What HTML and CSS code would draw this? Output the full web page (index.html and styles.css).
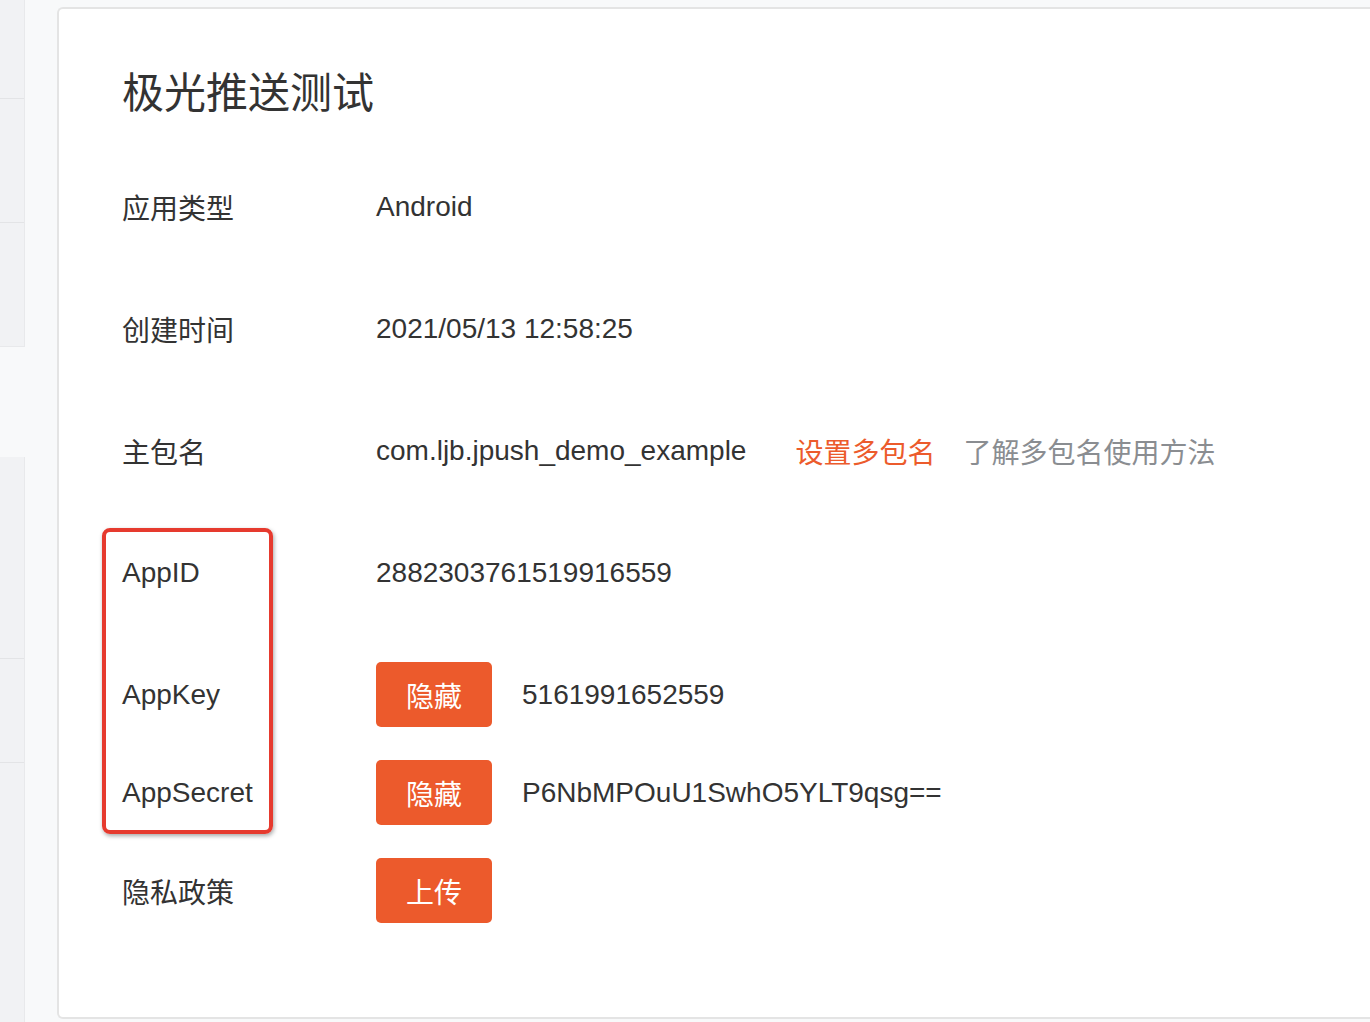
FILE: index.html
```
<!DOCTYPE html>
<html lang="zh-CN">
<head>
    <meta charset="UTF-8">
    <meta name="viewport" content="width=device-width, initial-scale=1.0">
    <title>极光推送测试</title>
    <link rel="stylesheet" href="styles.css">
</head>
<body>
    <div class="page">
        <div class="sidebar">
            <div class="side-group">
                <div class="side-item" style="height: 98px"></div>
                <div class="side-item" style="height: 123px"></div>
                <div class="side-item" style="height: 123px"></div>
            </div>
            <div class="side-group lower">
                <div class="side-item" style="height: 201px"></div>
                <div class="side-item" style="height: 103px"></div>
                <div class="side-item" style="height: 300px"></div>
            </div>
        </div>

        <div class="card">
            <h1 class="card-title">极光推送测试</h1>

            <div class="row tall">
                <div class="label">应用类型</div>
                <div class="value">Android</div>
            </div>
            <div class="row tall">
                <div class="label">创建时间</div>
                <div class="value">2021/05/13 12:58:25</div>
            </div>
            <div class="row tall">
                <div class="label">主包名</div>
                <div class="value">com.ljb.jpush_demo_example</div>
                <a class="link primary" href="#">设置多包名</a>
                <a class="link muted" href="#">了解多包名使用方法</a>
            </div>
            <div class="row tall">
                <div class="label">AppID</div>
                <div class="value">2882303761519916559</div>
            </div>
            <div class="row">
                <div class="label">AppKey</div>
                <button class="btn">隐藏</button>
                <div class="value secret">5161991652559</div>
            </div>
            <div class="row">
                <div class="label">AppSecret</div>
                <button class="btn">隐藏</button>
                <div class="value secret">P6NbMPOuU1SwhO5YLT9qsg==</div>
            </div>
            <div class="row">
                <div class="label">隐私政策</div>
                <button class="btn">上传</button>
            </div>

            <!-- annotation around the key fields -->
            <div class="highlight"></div>
        </div>
    </div>
</body>
</html>
```

FILE: styles.css
```
html, body {
    margin: 0;
    padding: 0;
}
body {
    font-family: "Liberation Sans", "Noto Sans CJK SC", sans-serif;
    background: #f8f9fa;
    color: #333;
    overflow: hidden;
    height: 1022px;
}
.page {
    display: flex;
    align-items: flex-start;
    height: 1022px;
}
.sidebar {
    width: 25px;
    flex-shrink: 0;
    display: flex;
    flex-direction: column;
}
.side-group {
    display: flex;
    flex-direction: column;
    background: #f1f2f4;
    border-right: 1px solid #e8e9eb;
    border-bottom: 1px solid #e8e9eb;
}
.side-group.lower {
    margin-top: 110px;
    border-bottom: none;
}
.side-item {
    border-bottom: 1px solid #e3e4e6;
}
.side-item:last-child {
    border-bottom: none;
}
.card {
    position: relative;
    flex: 1;
    height: 1012px;
    box-sizing: border-box;
    margin: 7px 0 0 32px;
    padding: 64px 0 0 63px;
    background: #fff;
    border: 2px solid #e4e4e4;
    border-right: none;
    border-radius: 6px 0 0 6px;
}
.card-title {
    margin: 0 0 59px 0;
    font-size: 42px;
    line-height: 42px;
    font-weight: normal;
    color: #333;
}
.row {
    display: flex;
    align-items: center;
    height: 65px;
    margin-bottom: 33px;
    font-size: 28px;
}
.row.tall {
    margin-bottom: 57px;
}
.label {
    width: 254px;
    flex-shrink: 0;
    color: #333;
}
.value {
    color: #333;
}
.value.secret {
    margin-left: 30px;
}
.link {
    text-decoration: none;
    font-size: 28px;
}
.link.primary {
    color: #ec5b2c;
    margin-left: 49px;
}
.link.muted {
    color: #8a8d91;
    margin-left: 28px;
}
.btn {
    width: 116px;
    height: 65px;
    border: none;
    border-radius: 5px;
    background: #ec5a2c;
    color: #fff;
    font-family: inherit;
    font-size: 28px;
    padding: 0;
    cursor: pointer;
}
.highlight {
    position: absolute;
    left: 43px;
    top: 519px;
    width: 171px;
    height: 306px;
    box-sizing: border-box;
    border: 4px solid #e63a2e;
    border-radius: 8px;
    box-shadow: 1px 2px 4px rgba(0, 0, 0, 0.35);
}
```
